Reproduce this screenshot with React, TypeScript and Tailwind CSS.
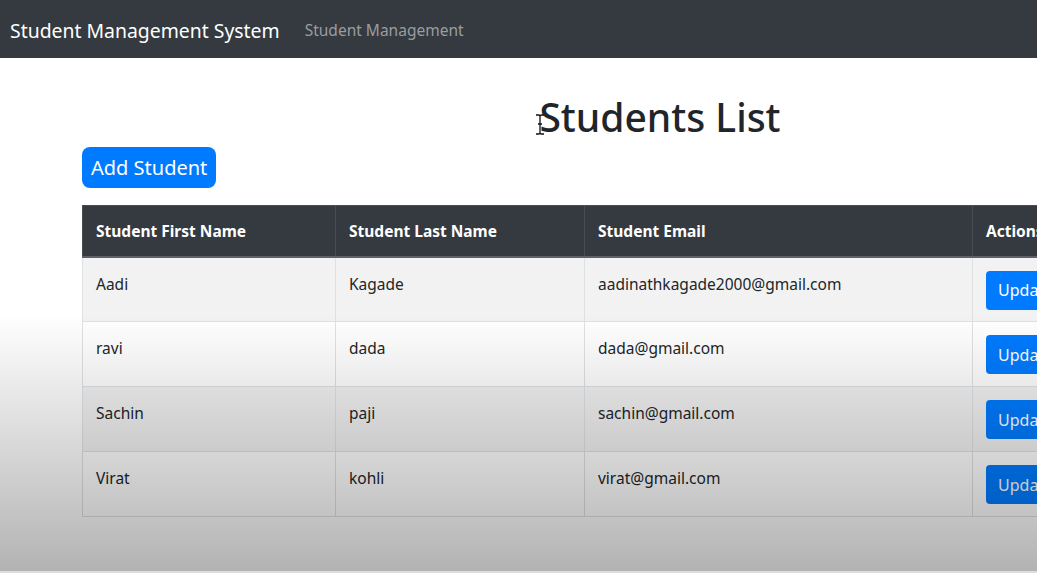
import React from "react";

const rows = [
  { first: "Aadi", last: "Kagade", email: "aadinathkagade2000@gmail.com" },
  { first: "ravi", last: "dada", email: "dada@gmail.com" },
  { first: "Sachin", last: "paji", email: "sachin@gmail.com" },
  { first: "Virat", last: "kohli", email: "virat@gmail.com" },
];

export default function App() {
  return (
    <div
      className="relative w-[1037px] h-[573px] overflow-hidden bg-white text-[#212529]"
      style={{ fontFamily: '"Noto Sans", "Open Sans", sans-serif' }}
    >
      <nav className="h-[58px] bg-[#343a40] flex items-center pl-[10px] pt-[3px]">
        <span className="text-[19.4px] text-white leading-none">Student Management System</span>
        <span className="ml-[25px] text-[15.5px] text-[#9a9da0] leading-none">Student Management</span>
      </nav>

      <main className="ml-[82px] w-[1156px]">
        <h1 className="mt-[32px] text-center text-[39px] font-medium leading-[53px]">Students List</h1>
        <button className="mt-[4px] h-[41px] px-[9px] rounded-[8px] bg-[#007bff] text-white text-[20px] leading-none">
          Add Student
        </button>
        <table className="mt-[17px] w-full border-collapse text-[15.5px]">
          <colgroup>
            <col className="w-[253px]" />
            <col className="w-[249px]" />
            <col className="w-[388px]" />
            <col />
          </colgroup>
          <thead>
            <tr className="bg-[#343a40] text-white h-[51px]">
              {["Student First Name", "Student Last Name", "Student Email", "Actions"].map((h) => (
                <th
                  key={h}
                  className="text-left font-bold px-[13px] pt-[2px] border border-[#454d55] border-b-2 border-b-[#5c6268]"
                >
                  {h}
                </th>
              ))}
            </tr>
          </thead>
          <tbody>
            {rows.map((r, i) => (
              <tr key={r.email} className={i % 2 === 0 ? "bg-[#f2f2f2]" : "bg-white"}>
                <td className="h-[65px] align-top pt-[15px] px-[13px] border border-[#dee2e6]">{r.first}</td>
                <td className="align-top pt-[15px] px-[13px] border border-[#dee2e6]">{r.last}</td>
                <td className="align-top pt-[15px] px-[13px] border border-[#dee2e6]">{r.email}</td>
                <td className="align-top pt-[13px] px-[13px] border border-[#dee2e6]">
                  <div className="flex gap-[8px]">
                    <button className="h-[39px] px-[12px] rounded-[4px] bg-[#007bff] text-white text-[16px]">
                      Update
                    </button>
                    <button className="h-[39px] px-[12px] rounded-[4px] bg-[#dc3545] text-white text-[16px]">
                      Delete
                    </button>
                  </div>
                </td>
              </tr>
            ))}
          </tbody>
        </table>
      </main>

      <svg
        className="absolute left-[535px] top-[114px] pointer-events-none"
        width="10"
        height="21"
        viewBox="0 0 10 21"
      >
        <path d="M1 1h3l1 1 1-1h3M5 2v17M1 20h3l1-1 1 1h3M3 10h4" stroke="#111" strokeWidth="1.3" fill="none" />
      </svg>

      <div className="absolute left-0 right-0 top-[315px] h-[258px] pointer-events-none bg-linear-to-b from-transparent to-[rgba(0,0,0,0.3)]" />
      <div className="absolute left-0 right-0 bottom-0 h-[2px] bg-[#dedede] pointer-events-none" />
    </div>
  );
}
